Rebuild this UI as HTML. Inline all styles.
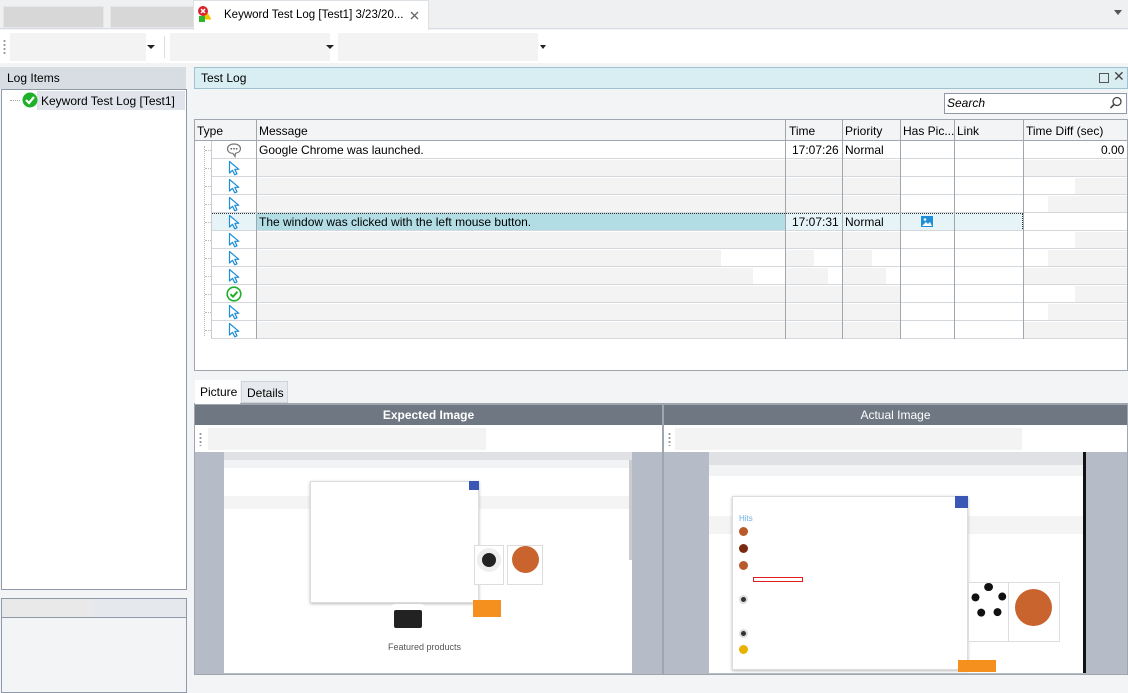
<!DOCTYPE html>
<html><head><meta charset="utf-8"><style>
*{margin:0;padding:0;box-sizing:border-box}
body{width:1128px;height:687px;position:relative;background:#f3f4f6;font-family:"Liberation Sans",sans-serif;font-size:12px;color:#000;overflow:hidden}
.a{position:absolute}
.t{font-size:12px;line-height:18px;white-space:nowrap}
.g{background:#f3f3f3}
</style></head><body>
<!-- top tabs -->
<div class="a" style="left:0;top:0;width:1128px;height:29px;background:#eef0f2;border-bottom:1px solid #d8dce2"></div>
<div class="a" style="left:3px;top:6px;width:101px;height:22px;background:#d7d7d7;border:1px solid #e6e6e6"></div>
<div class="a" style="left:110px;top:6px;width:84px;height:22px;background:#d7d7d7;border:1px solid #e6e6e6"></div>
<div class="a" style="left:193px;top:0;width:236px;height:30px;background:#fff;border:1px solid #dde0e4;border-bottom:none"></div>
<svg class="a" style="left:197px;top:5px" width="16" height="18"><path d="M9 5l5.5 9.5h-11z" fill="#f3c300"/><circle cx="6" cy="6" r="5" fill="#d8232a"/><path d="M4 4l4 4M8 4l-4 4" stroke="#fff" stroke-width="1.5"/><rect x="2" y="11" width="6" height="6" fill="#2db52d"/></svg>
<div class="a t" style="left:224px;top:6px;font-size:11.5px">Keyword Test Log [Test1] 3/23/20...</div>
<svg class="a" style="left:410px;top:11px" width="9" height="9"><path d="M1 1L8 8M8 1L1 8" stroke="#666" stroke-width="1.3"/></svg>
<div class="a" style="left:1114px;top:10px;width:0;height:0;border-left:4px solid transparent;border-right:4px solid transparent;border-top:5px solid #555"></div>
<!-- toolbar -->
<div class="a" style="left:0;top:30px;width:1128px;height:33px;background:#fff"></div>
<div class="a" style="left:3px;top:39px;width:3px;height:16px;background:radial-gradient(circle,#999 1px,transparent 1.2px) 0 0/3px 4px"></div>
<div class="a g" style="left:10px;top:33px;width:136px;height:28px"></div>
<div class="a" style="left:147px;top:45px;border-left:4px solid transparent;border-right:4px solid transparent;border-top:4px solid #222"></div>
<div class="a" style="left:164px;top:36px;width:1px;height:22px;background:#ddd"></div>
<div class="a g" style="left:170px;top:33px;width:160px;height:28px"></div>
<div class="a" style="left:326px;top:45px;border-left:4px solid transparent;border-right:4px solid transparent;border-top:4px solid #222"></div>
<div class="a g" style="left:338px;top:33px;width:200px;height:28px"></div>
<div class="a" style="left:540px;top:45px;border-left:3px solid transparent;border-right:3px solid transparent;border-top:4px solid #222"></div>
<!-- left panel -->
<div class="a" style="left:0;top:67px;width:186px;height:22px;background:#d8dde3"></div>
<div class="a t" style="left:7px;top:69px">Log Items</div>
<div class="a" style="left:1px;top:89px;width:186px;height:501px;background:#fff;border:1px solid #8f99a8"></div>
<div class="a" style="left:10px;top:100px;width:10px;border-top:1px dotted #aaa"></div>
<div class="a" style="left:37px;top:91px;width:148px;height:19px;background:#e1e5eb"></div>
<svg class="a" style="left:22px;top:92px" width="16" height="16"><circle cx="8" cy="8" r="7.5" fill="#1fb02a"/><path d="M4 8l3 3 5-6" stroke="#fff" stroke-width="2.2" fill="none"/></svg>
<div class="a t" style="left:41px;top:92px">Keyword Test Log [Test1]</div>
<div class="a" style="left:1px;top:598px;width:186px;height:95px;background:#f3f4f5;border:1px solid #8f99a8"></div>
<div class="a" style="left:2px;top:599px;width:184px;height:19px;background:#e5e8ec;border-bottom:1px solid #8f99a8"></div>
<div class="a" style="left:2px;top:599px;width:91px;height:18px;background:#e9e9e9"></div>
<!-- right: test log header -->
<div class="a" style="left:194px;top:67px;width:934px;height:22px;background:#d8eef2;border:1px solid #9cc3cf"></div>
<div class="a t" style="left:201px;top:69px">Test Log</div>
<div class="a" style="left:1099px;top:73px;width:10px;height:10px;border:1px solid #555"></div>
<div class="a" style="left:1113px;top:68px;font-size:14px;color:#444">✕</div>
<div class="a" style="left:944px;top:93px;width:183px;height:21px;background:#fff;border:1px solid #8f99a8"></div>
<div class="a t" style="left:947px;top:94px;font-style:italic">Search</div>
<svg class="a" style="left:1109px;top:96px" width="14" height="14"><circle cx="8" cy="5.5" r="4" stroke="#444" fill="none" stroke-width="1.3"/><path d="M5 8.5L1.5 12" stroke="#444" stroke-width="1.6"/></svg>
<!-- grid -->
<div class="a" style="left:194px;top:119px;width:934px;height:252px;background:#fff;border:1px solid #a0a6ae"></div>
<div class="a" style="left:195px;top:120px;width:932px;height:21px;background:#f3f4f6;border-bottom:1px solid #a0a6ae"></div>
<div class="a t" style="left:197px;top:122px">Type</div>
<div class="a t" style="left:259px;top:122px">Message</div>
<div class="a t" style="left:789px;top:122px">Time</div>
<div class="a t" style="left:845px;top:122px">Priority</div>
<div class="a t" style="left:903px;top:122px">Has Pic...</div>
<div class="a t" style="left:957px;top:122px">Link</div>
<div class="a t" style="left:1026px;top:122px">Time Diff (sec)</div>
<div id="rows"></div>
<!-- column lines -->
<div class="a" style="left:256px;top:120px;width:1px;height:219px;background:#a0a6ae"></div>
<div class="a" style="left:785px;top:120px;width:1px;height:219px;background:#a0a6ae"></div>
<div class="a" style="left:842px;top:120px;width:1px;height:219px;background:#a0a6ae"></div>
<div class="a" style="left:900px;top:120px;width:1px;height:219px;background:#a0a6ae"></div>
<div class="a" style="left:954px;top:120px;width:1px;height:219px;background:#a0a6ae"></div>
<div class="a" style="left:1023px;top:120px;width:1px;height:219px;background:#a0a6ae"></div>
<div class="a" style="left:211px;top:141px;width:1px;height:198px;background:#c8ccd2"></div>
<div class="a" style="left:204px;top:146px;height:190px;border-left:1px dotted #bbb"></div>
<!-- bottom tabs -->
<div class="a" style="left:194px;top:403px;width:934px;height:1px;background:#a0a6ae"></div>
<div class="a" style="left:195px;top:380px;width:45px;height:24px;background:#fff"></div>
<div class="a t" style="left:200px;top:383px">Picture</div>
<div class="a" style="left:241px;top:381px;width:47px;height:22px;background:#e6eaee;border:1px solid #d0d4da"></div>
<div class="a t" style="left:247px;top:384px">Details</div>
<!-- expected -->
<div class="a" style="left:194px;top:404px;width:469px;height:271px;border:1px solid #a0a6ae;background:#b5bcc8"></div>
<div class="a" style="left:195px;top:405px;width:467px;height:20px;background:#6f7782;color:#fff;text-align:center;font-weight:bold;line-height:20px">Expected Image</div>
<div class="a" style="left:195px;top:425px;width:467px;height:27px;background:#fff"></div>
<div class="a" style="left:199px;top:432px;width:3px;height:14px;background:radial-gradient(circle,#999 1px,transparent 1.2px) 0 0/3px 4px"></div>
<div class="a g" style="left:208px;top:428px;width:278px;height:22px"></div>
<div class="a" style="left:224px;top:452px;width:408px;height:221px;background:#fff"></div>
<div class="a" style="left:224px;top:452px;width:408px;height:8px;background:#dfe1e5"></div>
<div class="a" style="left:224px;top:460px;width:408px;height:8px;background:#f1f3f4"></div>
<div class="a" style="left:224px;top:496px;width:408px;height:13px;background:#f4f4f4"></div>
<div class="a" style="left:310px;top:481px;width:169px;height:122px;background:#fff;border:1px solid #ddd;box-shadow:0 1px 3px #bbb"></div>
<div class="a" style="left:469px;top:481px;width:10px;height:9px;background:#3a57b5"></div>
<div class="a" style="left:474px;top:545px;width:30px;height:40px;background:#fff;border:1px solid #ddd"></div>
<div class="a" style="left:477px;top:548px;width:24px;height:24px;border-radius:50%;background:#222;border:5px solid #eee"></div>
<div class="a" style="left:507px;top:545px;width:36px;height:40px;background:#fff;border:1px solid #ddd"></div>
<div class="a" style="left:512px;top:546px;width:27px;height:27px;border-radius:50%;background:#c9642f"></div>
<div class="a" style="left:388px;top:604px;width:40px;height:30px;background:#222;border-radius:8px;border:6px solid #fff"></div>
<div class="a" style="left:473px;top:600px;width:28px;height:17px;background:#f5901e"></div>
<div class="a t" style="left:388px;top:638px;font-size:9px;color:#555">Featured products</div>
<div class="a" style="left:629px;top:460px;width:3px;height:100px;background:#ccc"></div>
<!-- actual -->
<div class="a" style="left:663px;top:404px;width:465px;height:271px;border:1px solid #a0a6ae;background:#b5bcc8"></div>
<div class="a" style="left:664px;top:405px;width:463px;height:20px;background:#6f7782;color:#fff;text-align:center;line-height:20px">Actual Image</div>
<div class="a" style="left:664px;top:425px;width:463px;height:27px;background:#fff"></div>
<div class="a" style="left:668px;top:432px;width:3px;height:14px;background:radial-gradient(circle,#999 1px,transparent 1.2px) 0 0/3px 4px"></div>
<div class="a g" style="left:675px;top:428px;width:347px;height:22px"></div>
<div class="a" style="left:709px;top:452px;width:377px;height:221px;background:#fff;border-right:3px solid #111"></div>
<div class="a" style="left:709px;top:452px;width:374px;height:13px;background:#dfe1e5"></div>
<div class="a" style="left:709px;top:465px;width:374px;height:11px;background:#f1f3f4"></div>
<div class="a" style="left:709px;top:516px;width:374px;height:18px;background:#f4f4f4"></div>
<div class="a" style="left:732px;top:496px;width:236px;height:174px;background:#fff;border:1px solid #ddd;box-shadow:0 1px 3px #bbb"></div>
<div class="a" style="left:955px;top:496px;width:13px;height:12px;background:#3a57b5"></div>
<div class="a t" style="left:739px;top:510px;font-size:8px;color:#6ab0e8">Hits</div>
<div class="a" style="left:739px;top:527px;width:9px;height:9px;border-radius:50%;background:#b85a2a"></div>
<div class="a" style="left:739px;top:544px;width:9px;height:9px;border-radius:50%;background:#7a2a10"></div>
<div class="a" style="left:739px;top:561px;width:9px;height:9px;border-radius:50%;background:#b85a2a"></div>
<div class="a" style="left:753px;top:577px;width:50px;height:5px;border:1px solid #e02020"></div>
<div class="a" style="left:739px;top:595px;width:9px;height:9px;border-radius:50%;background:#333;border:2px solid #ddd"></div>
<div class="a" style="left:739px;top:629px;width:9px;height:9px;border-radius:50%;background:#333;border:2px solid #ddd"></div>
<div class="a" style="left:739px;top:645px;width:9px;height:9px;border-radius:50%;background:#e8b300"></div>
<div class="a" style="left:968px;top:582px;width:62px;height:60px;background:#fff;border:1px solid #ddd"></div>
<div class="a" style="left:971px;top:583px;width:36px;height:36px;border-radius:50%;background:#fff;border:8px dotted #111"></div>
<div class="a" style="left:1008px;top:582px;width:52px;height:60px;background:#fff;border:1px solid #ddd"></div>
<div class="a" style="left:1015px;top:589px;width:37px;height:37px;border-radius:50%;background:#c9642f"></div>
<div class="a" style="left:958px;top:660px;width:38px;height:12px;background:#f5901e"></div>
<script>
var rows=document.getElementById('rows'),h='';
var icons=['chat','c','c','c','c','c','c','c','ok','c','c'];
for(var i=0;i<11;i++){var y=141+18*i;
 if(i==4){h+='<div class="a" style="left:211px;top:'+y+'px;width:45px;height:18px;background:#e6f4f8"></div><div class="a" style="left:256px;top:'+y+'px;width:529px;height:18px;background:#b2dde5"></div><div class="a" style="left:785px;top:'+y+'px;width:238px;height:18px;background:#e6f4f8"></div><div class="a" style="left:211px;top:'+y+'px;width:812px;height:18px;border:1px dotted #333"></div>';}
 else if(i>0){h+='<div class="a g" style="left:257px;top:'+(y+1)+'px;width:'+(i==6?464:i==7?496:528)+'px;height:16px"></div><div class="a g" style="left:786px;top:'+(y+1)+'px;width:'+(i==6?28:i==7?42:56)+'px;height:16px"></div><div class="a g" style="left:843px;top:'+(y+1)+'px;width:'+(i==6?29:i==7?43:57)+'px;height:16px"></div><div class="a g" style="left:'+(i%3==0?1048:i%3==1?1024:1075)+'px;top:'+(y+1)+'px;width:'+(i%3==0?79:i%3==1?103:52)+'px;height:16px"></div>';}
 h+='<div class="a" style="left:212px;top:'+(y+17)+'px;width:915px;height:1px;background:#d4d8dc"></div><div class="a" style="left:205px;top:'+(y+9)+'px;width:6px;border-top:1px dotted #bbb"></div>';
 var ic=icons[i],s='';
 if(ic=='c')s='<svg class="a" style="left:228px;top:'+(y+1)+'px" width="13" height="16"><path d="M1.5 1.5V13L4.5 10.3 6.8 14.8 9 13.8 6.8 9.3H10.8Z" fill="#fff" stroke="#1e8fd8" stroke-width="1.2" stroke-linejoin="round"/></svg>';
 else if(ic=='ok')s='<svg class="a" style="left:226px;top:'+(y+1)+'px" width="16" height="16"><circle cx="8" cy="8" r="6.8" fill="#fff" stroke="#1fb02a" stroke-width="1.6"/><path d="M4.5 8.2l2.5 2.5 4.5-5" stroke="#1fb02a" stroke-width="2" fill="none"/></svg>';
 else s='<svg class="a" style="left:226px;top:'+(y+1)+'px" width="16" height="16"><path d="M8 2C4 2 1.5 4 1.5 6.8S4 11.5 7 11.5L9 14.5 9.5 11.3C12.5 10.8 14.5 9 14.5 6.8 14.5 4 12 2 8 2Z" fill="#fff" stroke="#777" stroke-width="1.2"/><circle cx="5.3" cy="6.8" r=".9" fill="#666"/><circle cx="8" cy="6.8" r=".9" fill="#666"/><circle cx="10.7" cy="6.8" r=".9" fill="#666"/></svg>';
 h+=s;}
h+='<div class="a t" style="left:259px;top:141px">Google Chrome was launched.</div><div class="a t" style="left:792px;top:141px">17:07:26</div><div class="a t" style="left:845px;top:141px">Normal</div><div class="a t" style="left:1101px;top:141px">0.00</div>';
h+='<div class="a t" style="left:259px;top:213px">The window was clicked with the left mouse button.</div><div class="a t" style="left:792px;top:213px">17:07:31</div><div class="a t" style="left:845px;top:213px">Normal</div>';
h+='<svg class="a" style="left:921px;top:216px" width="12" height="11"><rect width="12" height="11" fill="#1e8fd8"/><circle cx="4" cy="3.5" r="1.3" fill="#fff"/><path d="M1 10l4-4 2 2 2-2 2 4z" fill="#fff"/></svg>';
rows.innerHTML=h;
</script>
</body></html>
